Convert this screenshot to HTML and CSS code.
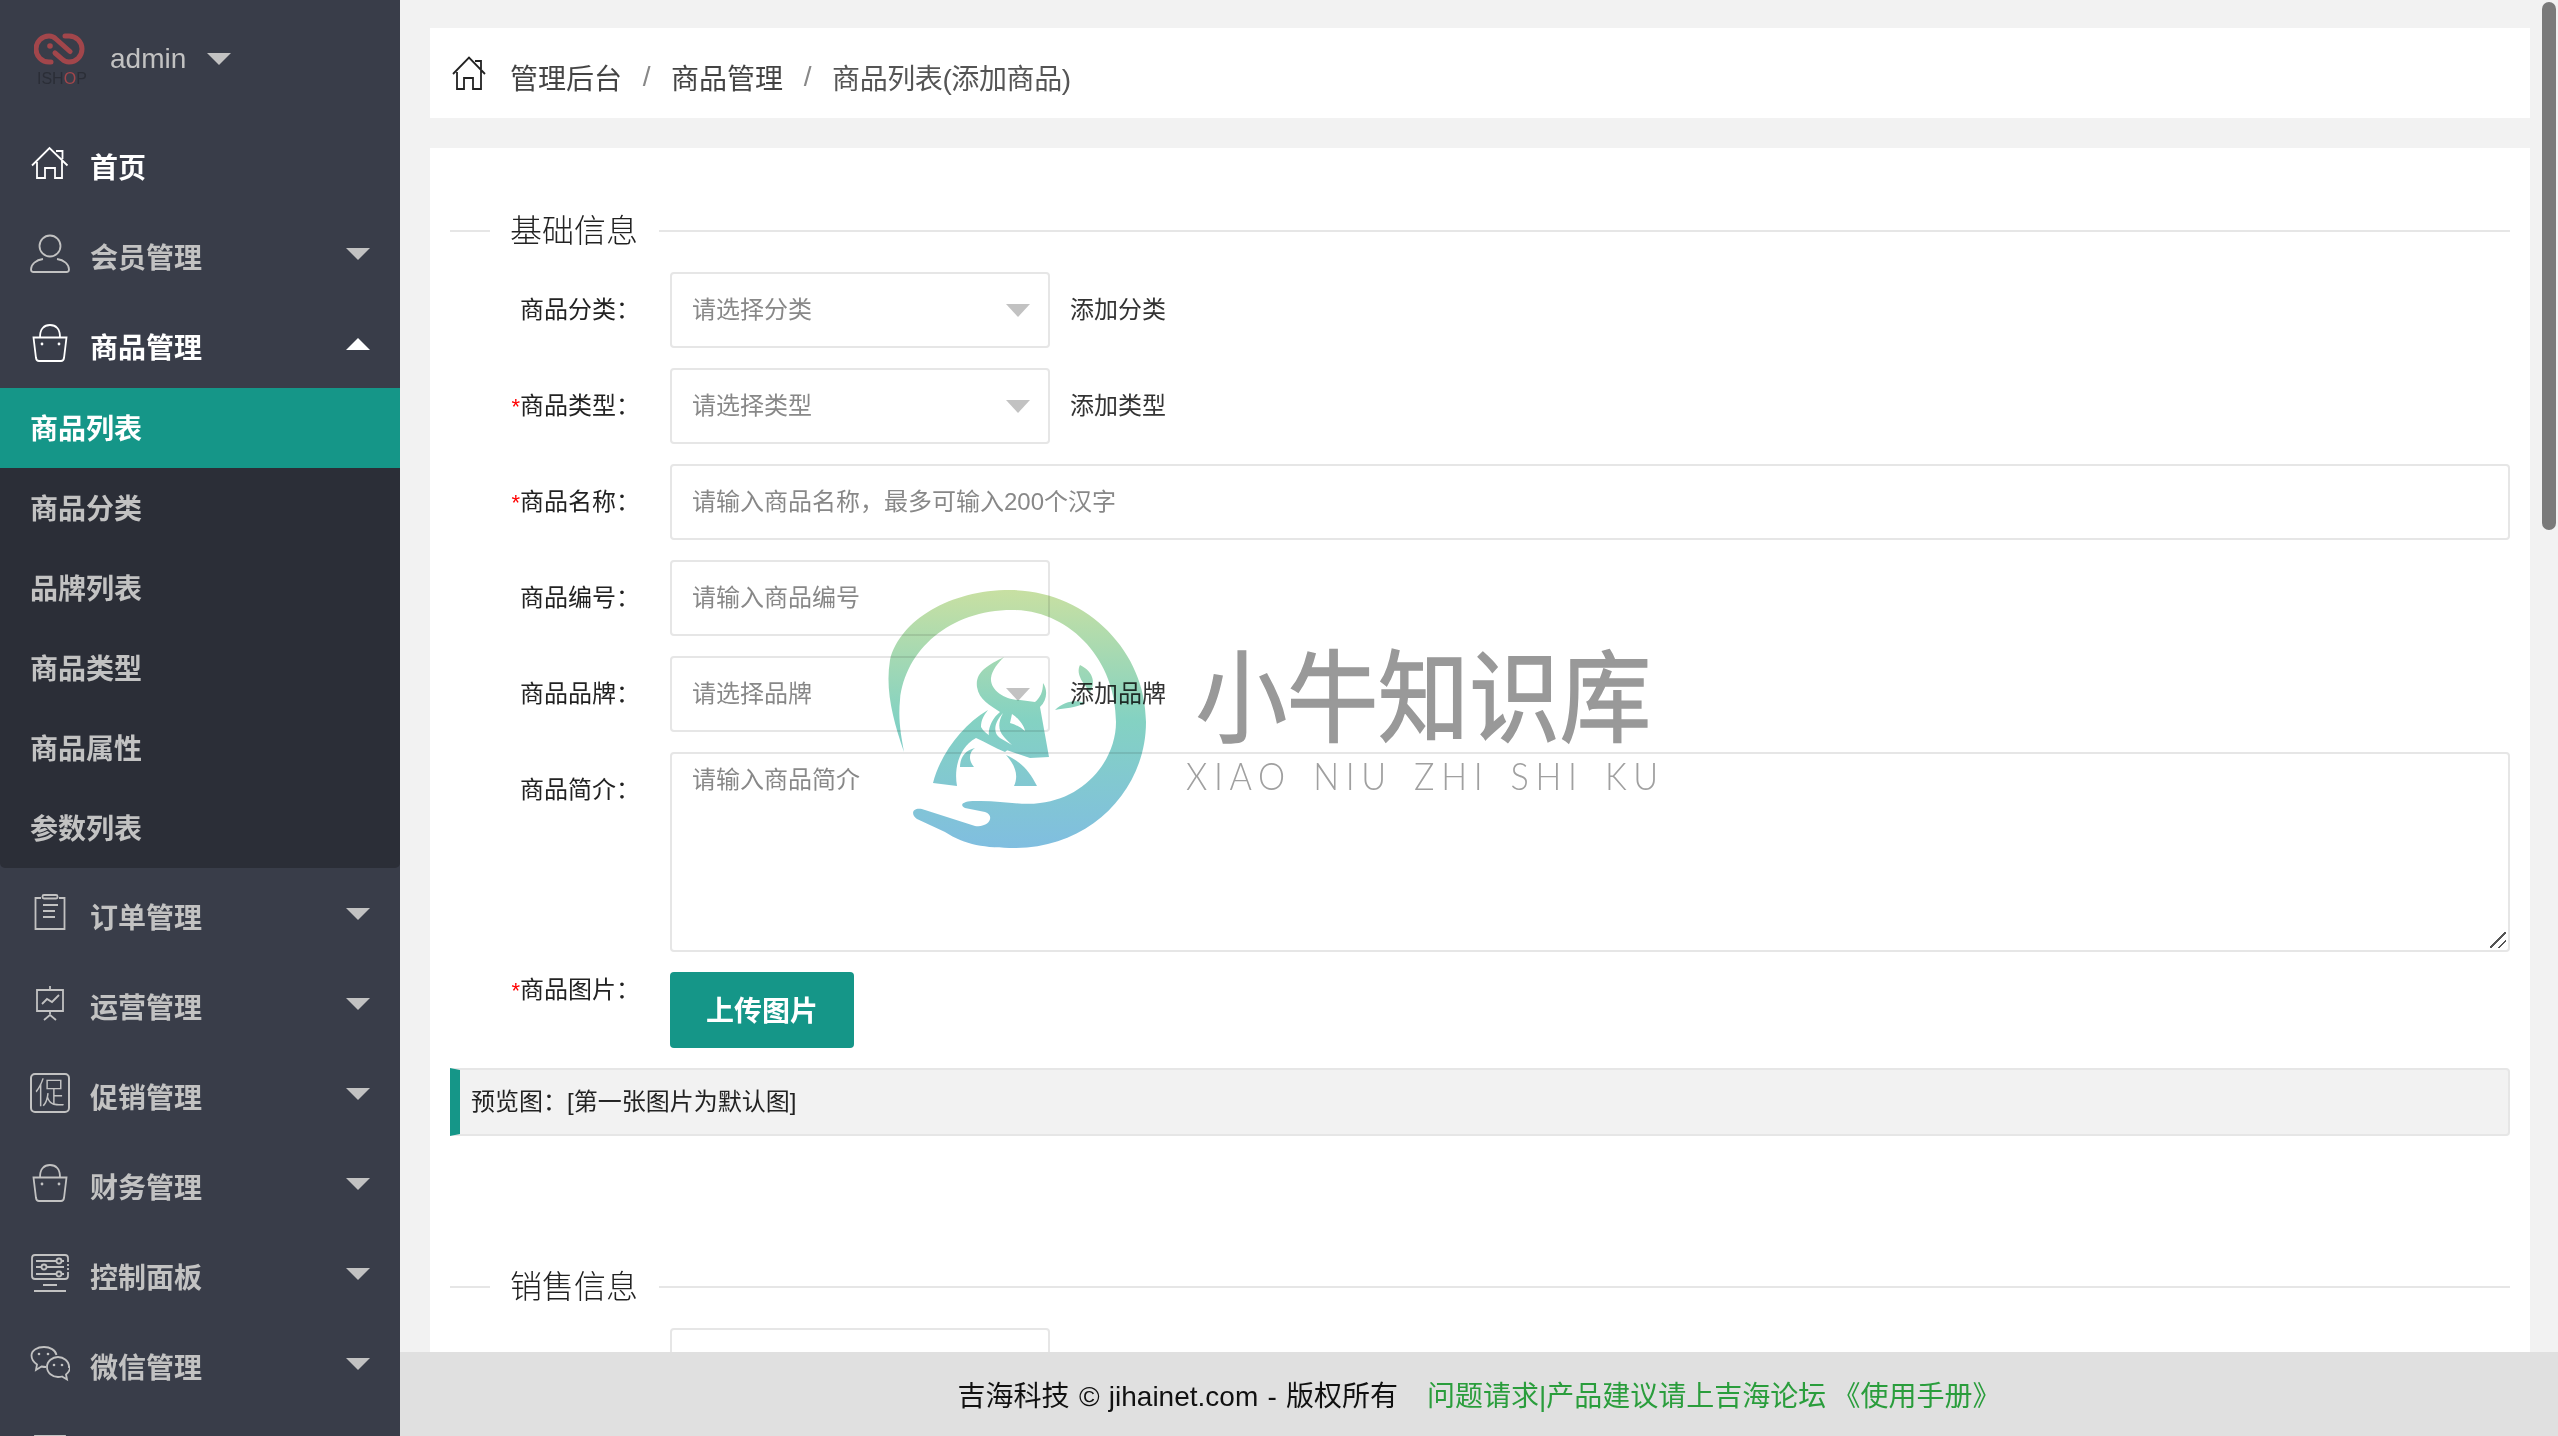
FILE: index.html
```html
<!DOCTYPE html>
<html lang="zh-CN">
<head>
<meta charset="utf-8">
<title>商品列表(添加商品)</title>
<link rel="stylesheet" href="styles.css">
</head>
<body>
<div class="app">
  <aside class="sidebar">
    <div class="user">
      <div class="logo">
        <svg class="logo-mark" viewBox="0 0 52 32">
          <g fill="none" stroke="#a2464b" stroke-width="5" stroke-linecap="round">
            <path d="M36 18.500 22 6Q19 3 15 3A13 13 0 0 0 15 29H17"/>
            <path d="M21 20 28 26Q31 29 35 29A13 13 0 0 0 35 3H31"/>
          </g>
          <circle cx="16" cy="13" r="2.800" fill="#a2464b"/>
        </svg>
        <span class="logo-text">ISH<span class="logo-o">O</span>P</span>
      </div>
      <span class="user-name">admin</span>
      <i class="caret caret-user"></i>
    </div>
    <nav class="nav">
      <a class="nav-item on">
        <svg class="ico" viewBox="0 0 40 40"><path d="M2 22.500 19.500 5 37.500 22.500M26 8h6.500v8M7 19v16h8V25h10v10h7V18"/></svg>
        <span class="nav-text">首页</span>
      </a>
      <a class="nav-item">
        <svg class="ico" viewBox="0 0 40 40"><circle cx="20" cy="13" r="10.500"/><path d="M13 26C6 27 1 31 1 36.500Q1 39 3.500 39h33Q39 39 39 36.500C39 31 34 27 27 26"/></svg>
        <span class="nav-text">会员管理</span>
        <i class="caret"></i>
      </a>
      <a class="nav-item on">
        <svg class="ico" viewBox="0 0 40 40"><path d="M10 14C10 6 14 2 20 2s10 4 10 12M3.500 14.500h33L34 35q-.5 3-3 3H9q-2.500 0-3-3Z"/><circle class="dot" cx="12" cy="21" r="1.400"/><circle class="dot" cx="29" cy="21" r="1.400"/></svg>
        <span class="nav-text">商品管理</span>
        <i class="caret caret-up"></i>
      </a>
      <div class="sub">
        <a class="sub-item active">商品列表</a>
        <a class="sub-item">商品分类</a>
        <a class="sub-item">品牌列表</a>
        <a class="sub-item">商品类型</a>
        <a class="sub-item">商品属性</a>
        <a class="sub-item">参数列表</a>
      </div>
      <a class="nav-item">
        <svg class="ico" viewBox="0 0 40 40"><path d="M11 5H5.500v31h29V5H29"/><rect x="12.500" y="2" width="15" height="3.500" rx="1.500"/><path d="M13 12h15M13 18h12M13 24h12"/></svg>
        <span class="nav-text">订单管理</span>
        <i class="caret"></i>
      </a>
      <a class="nav-item">
        <svg class="ico" viewBox="0 0 40 40"><path d="M7 7h26v21H7ZM20 3v4M20 28v3M14 37l6-5 6 5M12 21l5-5 5 3 7-7"/></svg>
        <span class="nav-text">运营管理</span>
        <i class="caret"></i>
      </a>
      <a class="nav-item">
        <span class="ico-box">促</span>
        <span class="nav-text">促销管理</span>
        <i class="caret"></i>
      </a>
      <a class="nav-item">
        <svg class="ico" viewBox="0 0 40 40"><path d="M10 14C10 6 14 2 20 2s10 4 10 12M3.500 14.500h33L34 35q-.5 3-3 3H9q-2.500 0-3-3Z"/><circle class="dot" cx="12" cy="21" r="1.400"/><circle class="dot" cx="29" cy="21" r="1.400"/></svg>
        <span class="nav-text">财务管理</span>
        <i class="caret"></i>
      </a>
      <a class="nav-item">
        <svg class="ico" viewBox="0 0 40 40"><path d="M38 9V5q0-3-3-3H5Q2 2 2 5v18q0 3 3 3h30q3 0 3-3v-4M38 11v2M38 15v2"/><path d="M6 8h20M32 8h2M6 14h5M17 14h17M6 21h20M32 21h2M13 32h14M4 38h32"/><circle cx="29" cy="8" r="2.500"/><circle cx="14" cy="14" r="2.500"/><circle cx="29" cy="21" r="2.500"/></svg>
        <span class="nav-text">控制面板</span>
        <i class="caret"></i>
      </a>
      <a class="nav-item">
        <svg class="ico" viewBox="0 0 40 40"><path d="M16 24q-2 0-4.500-.5L6 27l1-5.500C3.500 19 1.500 16 1.500 12.500 1.500 7 7.500 4 14 4c6 0 11.500 3 12.500 8"/><path d="M39 24c0-6-5.500-10-11-10s-11 4-11 10 5.500 10 11 10q2 0 4-.5l5 3-1-5c2.500-2 4-4.500 4-7.500Z"/><circle class="dot" cx="9" cy="11" r="1.300"/><circle class="dot" cx="18" cy="11" r="1.300"/><circle class="dot" cx="24" cy="22" r="1.300"/><circle class="dot" cx="32" cy="22" r="1.300"/></svg>
        <span class="nav-text">微信管理</span>
        <i class="caret"></i>
      </a>
      <a class="nav-item">
        <svg class="ico" viewBox="0 0 40 40"><path d="M5 3h30v32H5Z"/></svg>
      </a>
    </nav>
  </aside>

  <main class="main">
    <div class="content">
      <div class="crumb">
        <svg class="crumb-home" viewBox="0 0 34 34"><path d="M1 18 17 1.500 33 18M23 5h6v8M5 16v17h7V22h9v11h8V14"/></svg>
        <span class="crumb-link">管理后台</span>
        <span class="crumb-sep">/</span>
        <span class="crumb-link">商品管理</span>
        <span class="crumb-sep">/</span>
        <span class="crumb-cur">商品列表(添加商品)</span>
      </div>
      <section class="card">
        <div class="legend"><span class="legend-text">基础信息</span></div>
        <div class="row">
          <label class="label">商品分类：</label>
          <div class="select"><span class="placeholder">请选择分类</span><i class="select-caret"></i></div>
          <span class="aside">添加分类</span>
        </div>
        <div class="row">
          <label class="label"><em class="req">*</em>商品类型：</label>
          <div class="select"><span class="placeholder">请选择类型</span><i class="select-caret"></i></div>
          <span class="aside">添加类型</span>
        </div>
        <div class="row">
          <label class="label"><em class="req">*</em>商品名称：</label>
          <input class="input wide" placeholder="请输入商品名称，最多可输入200个汉字">
        </div>
        <div class="row">
          <label class="label">商品编号：</label>
          <input class="input" placeholder="请输入商品编号">
        </div>
        <div class="row">
          <label class="label">商品品牌：</label>
          <div class="select"><span class="placeholder">请选择品牌</span><i class="select-caret"></i></div>
          <span class="aside">添加品牌</span>
        </div>
        <div class="row">
          <label class="label">商品简介：</label>
          <div class="area-wrap"><textarea class="textarea" placeholder="请输入商品简介"></textarea></div>
        </div>
        <div class="row">
          <label class="label label-top"><em class="req">*</em>商品图片：</label>
          <button class="btn"><span class="btn-text">上传图片</span></button>
        </div>
        <div class="quote"><span class="quote-text">预览图：[第一张图片为默认图]</span></div>
        <div class="legend legend-next"><span class="legend-text">销售信息</span></div>
        <div class="row">
          <label class="label"></label>
          <input class="input">
        </div>
      </section>
    </div>
    <footer class="footer">
      <span class="foot-copy">吉海科技 © jihainet.com - 版权所有</span>
      <a class="foot-link">问题请求|产品建议请上吉海论坛</a>
      <a class="foot-link foot-book">《使用手册》</a>
    </footer>
    <div class="thumb"></div>
    <div class="mark">
      <svg class="mark-logo" viewBox="880 580 280 280">
        <defs>
          <linearGradient id="g" gradientUnits="userSpaceOnUse" x1="0" y1="590" x2="0" y2="848">
            <stop offset="0" stop-color="#c8e0a2"/>
            <stop offset=".5" stop-color="#84d2c2"/>
            <stop offset="1" stop-color="#80bee0"/>
          </linearGradient>
        </defs>
        <g fill="url(#g)" fill-rule="evenodd">
          <path d="M904 752C893 720 885 690 890 660 900 620 950 590 1010 590 1085 590 1146 650 1146 722 1146 790 1090 848 1015 848 985 848 965 845 945 832L917 819C909 813 914 806 925 810L975 826C990 828 995 815 985 812L965 808C958 804 965 801 975 801 1000 800 1020 806 1040 803 1085 798 1116 760 1116 722 1116 660 1070 610 1012 610 950 610 905 650 900 700 898 720 901 735 904 752Z"/>
          <path d="M1004 657C988 665 975 672 977 687 979 700 990 705 1000 712 990 720 985 735 992 745L1030 758 1049 757 1040 707C1047 700 1048 690 1043 683 1043 692 1040 698 1035 702L1020 700C1005 700 990 690 991 678 992 670 998 663 1004 657ZM1003 713C995 722 992 732 1000 738L1012 745C1003 736 994 730 1003 713ZM1012 714C1018 718 1024 725 1025 731 1020 727 1015 724 1010 723Z"/>
          <path d="M988 710C962 725 940 755 933 783L957 786C954 770 958 748 976 738 985 742 995 748 1005 752L1010 748C1000 742 985 735 981 727 981 720 984 715 988 710Z"/>
          <path d="M975 748C965 750 960 758 960 767L974 767C968 760 969 752 975 748Z"/>
          <path d="M1006 755C1022 762 1030 772 1037 786L1014 786C1019 775 1015 765 1006 755Z"/>
          <path d="M1080 665C1095 672 1095 685 1090 692 1085 685 1075 675 1080 665ZM1055 710C1065 700 1078 700 1085 703 1075 708 1065 708 1055 710Z"/>
        </g>
      </svg>
      <div class="mark-words">
        <span class="mark-cn">小牛知识库</span>
        <span class="mark-en">XIAO NIU ZHI SHI KU</span>
      </div>
    </div>
  </main>
</div>
</body>
</html>
```
FILE: styles.css
```css
* { box-sizing: border-box; }
html, body { margin: 0; height: 100%; overflow: hidden; }
body {
  font-family: "Liberation Sans", "Noto Sans CJK SC", sans-serif;
  font-size: 24px;
  color: #333;
  background: #f2f2f2;
}
.app { display: flex; height: 1436px; }

/* sidebar */
.sidebar { width: 400px; flex: none; background: #393d49; overflow: hidden; color: #c2c2c2; }
.user { height: 122px; display: flex; align-items: center; padding: 0 0 4px 34px; }
.logo { width: 52px; flex: none; display: flex; flex-direction: column; padding-top: 2px; }
.logo-mark { width: 52px; height: 32px; display: block; }
.logo-text { margin-top: 5px; font-size: 16px; line-height: 17px; padding-left: 3px; color: #2b2e37; white-space: nowrap; }
.logo-o { color: #a2464b; }
.user-name { margin-left: 24px; font-size: 28px; line-height: 40px; }
.caret { width: 0; height: 0; border: 12px solid transparent; border-top-color: currentColor; border-bottom-width: 0; }
.caret-user { margin: 0 0 0 21px; }
.nav { display: flex; flex-direction: column; }
.nav-item { position: relative; height: 90px; flex: none; display: flex; align-items: center; padding: 0 30px; }
.nav-item.on { color: #fff; }
.ico { width: 40px; height: 40px; flex: none; margin-top: -8px; fill: none; stroke: currentColor; stroke-width: 1.8; }
.ico .dot { fill: currentColor; stroke: none; }
.ico-box {
  width: 40px; height: 40px; flex: none; margin-top: -8px;
  border: 2px solid currentColor; border-radius: 5px;
  display: flex; align-items: center; justify-content: center;
  font-size: 30px; line-height: 36px; font-weight: 300;
}
.nav-text { margin-left: 20px; padding-top: 3px; font-size: 28px; line-height: 40px; font-weight: 700; flex: 1; }
.nav-item .caret { margin: -6px 0 0; }
.caret-up { border-top-width: 0; border-top-color: transparent; border-bottom: 12px solid currentColor; }
.sub { margin: -4px 0 4px; background: #2b2e37; border-radius: 0 0 5px 5px; display: flex; flex-direction: column; }
.sub-item { height: 80px; display: flex; align-items: center; padding: 0 0 3px 30px; font-size: 28px; font-weight: 700; }
.sub-item.active { background: #159688; color: #fff; }

/* main */
.main { position: relative; flex: 1; min-width: 0; display: flex; flex-direction: column; }
.content { flex: 1; min-height: 0; overflow: hidden; padding: 28px 28px 0 30px; }
.crumb { height: 90px; background: #fff; display: flex; align-items: center; padding: 8px 0 0 22px; font-size: 28px; color: #444; }
.crumb-home { width: 34px; height: 34px; flex: none; margin: -8px 24px 0 0; fill: none; stroke: #222; stroke-width: 1.8; }
.crumb-sep { width: 49px; text-align: center; color: #888; }
.crumb-cur { color: #555; letter-spacing: -.4px; }
.card { margin-top: 30px; background: #fff; padding: 63px 20px 40px; }
.legend { height: 40px; margin-bottom: 21px; display: flex; align-items: center; }
.legend::before { content: ""; width: 40px; height: 2px; background: #e6e6e6; }
.legend::after { content: ""; flex: 1; height: 2px; background: #e6e6e6; }
.legend-text { padding: 0 21px 0 20px; font-size: 32px; line-height: 40px; color: #222; font-weight: 300; }
.legend-next { margin-top: 131px; }
.row { display: flex; align-items: flex-start; margin-bottom: 20px; }
.label { width: 220px; flex: none; padding: 24px 30px 0 0; text-align: right; font-size: 24px; line-height: 28px; white-space: nowrap; color: #222; }
.label-top { padding-top: 4px; }
.req { font-style: normal; color: #f00; font-size: 22px; }
.select, .input {
  position: relative; width: 380px; height: 76px; flex: none;
  border: 2px solid #e6e6e6; border-radius: 4px; background: #fff;
  padding: 0 20px; font: inherit; color: #333; outline: none;
}
.select { display: flex; align-items: center; }
.wide { width: 1840px; }
.placeholder { color: #888; padding-bottom: 6px; }
.input::placeholder, .textarea::placeholder { color: #888; opacity: 1; }
.select-caret { position: absolute; right: 18px; top: 30px; width: 0; height: 0; border: 12px solid transparent; border-top: 13px solid #c2c2c2; border-bottom-width: 0; }
.aside { margin-left: 20px; line-height: 76px; color: #333; }
.area-wrap { position: relative; width: 1840px; height: 200px; flex: none; }
.area-wrap::after {
  content: ""; position: absolute; right: 4px; bottom: 4px; width: 16px; height: 16px; pointer-events: none;
  background:
    linear-gradient(135deg, transparent 46%, #555 46%, #555 56%, transparent 56%) 0 0 / 16px 16px no-repeat,
    linear-gradient(135deg, transparent 46%, #555 46%, #555 62%, transparent 62%) 100% 100% / 8px 8px no-repeat;
}
.textarea {
  width: 100%; height: 100%; display: block;
  border: 2px solid #e6e6e6; border-radius: 4px; background: #fff;
  padding: 12px 20px 10px; font: inherit; line-height: 28px; color: #333; outline: none; resize: none;
}
.btn {
  width: 184px; height: 76px; border: 0; border-radius: 4px; background: #159688; color: #fff;
  font: inherit; font-size: 28px; font-weight: 700; padding: 0 0 3px;
}
.btn-text { display: block; }
.quote {
  height: 68px; display: flex; align-items: center; padding: 0 0 6px 11px;
  background: #f2f2f2; border: 2px solid #e6e6e6; border-left: 10px solid #159688; border-radius: 0 4px 4px 0;
  color: #222;
}

/* footer */
.footer { height: 84px; flex: none; background: #e0e0e0; display: flex; align-items: center; justify-content: center; gap: 29px; padding-right: 0; font-size: 28px; color: #111; position: relative; z-index: 2; }
.foot-copy { word-spacing: 1.500px; }
.foot-link { color: #2a9d3c; }
.foot-book { margin-left: -23px; }

/* scrollbar thumb and watermark float over the page */
.thumb { position: absolute; right: 2px; top: 2px; width: 14px; height: 528px; border-radius: 7px; background: #7a7a7a; }
.mark { position: absolute; left: 480px; top: 580px; display: flex; align-items: flex-start; pointer-events: none; mix-blend-mode: multiply; z-index: 3; }
.mark-logo { width: 280px; height: 280px; flex: none; }
.mark-words { display: flex; flex-direction: column; margin: 62px 0 0 26px; width: 480px; }
.mark-cn {
  display: block; width: 470px; margin-left: 10px; font-size: 91px; line-height: 116px; color: #999;
  white-space: nowrap; transform: scaleY(1.1); -webkit-text-stroke: 1.500px #999;
}
.mark-en {
  display: block; width: 540px; margin-top: -5px; font-family: "Lato", sans-serif; font-weight: 300; font-size: 38px; line-height: 44px;
  letter-spacing: 7.400px; word-spacing: 6px; color: #a0a0a0; white-space: nowrap;
  transform: scaleX(.9); transform-origin: 0 50%;
}
```
